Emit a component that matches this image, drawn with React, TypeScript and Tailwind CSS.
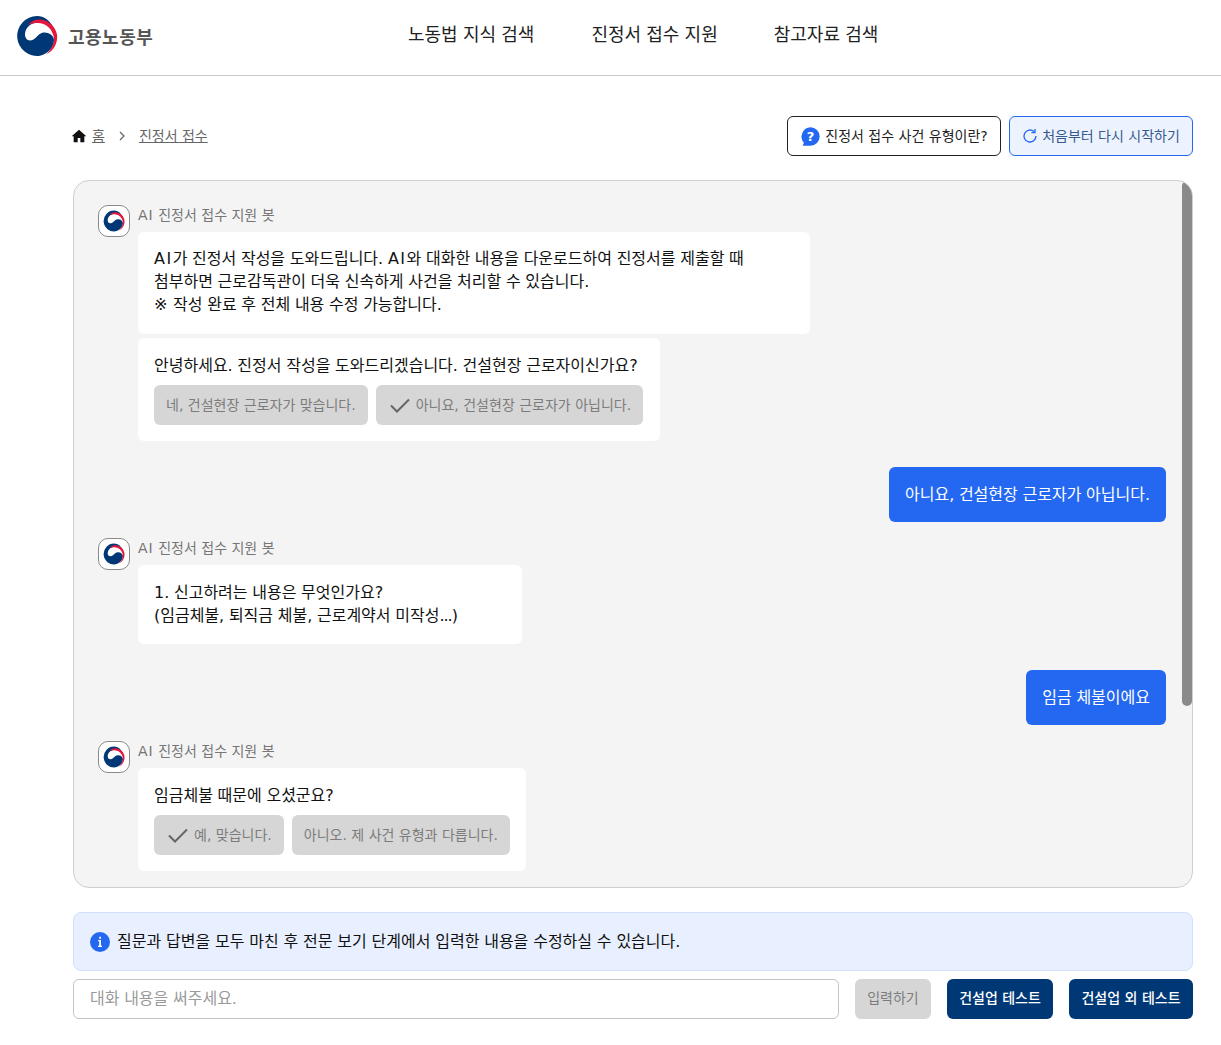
import React from "react";

function Logo({ className }: { className: string }) {
  return (
    <svg viewBox="0 0 42 42" className={className}>
      <path d="M21 1 A20 20 0 1 0 24 40.800 C33 38.500 38 31.500 38 25 C38 20.500 33 17.500 28.500 17.500 C24.500 17.500 22.500 20 20 22.500 C18 24.500 16 25.500 14 25.500 C11 25.500 9 22.500 9 19.500 C9 12.500 15 7.500 22 7.500 C29 7.500 35 10.500 38.500 15 C35.500 7 29 1 21 1 Z" fill="#003876" />
      <path d="M12 10 C15 6 20 4 24 4.500 C32 5 39.500 11 41 19.500 C42 28 38 35.500 30 39.500 C35.500 34.500 38.500 28.500 38 23 C36.500 13.500 29.500 8 22 8 C18.500 8 15 8.500 12 10 Z" fill="#e5173f" />
    </svg>
  );
}

function BotHead({ top }: { top?: boolean }) {
  return (
    <div className={top ? "flex gap-2" : "flex gap-2 mt-4"}>
      <div className="w-8 h-8 shrink-0 rounded-[10px] border border-[#8a8a8a] bg-white flex items-center justify-center">
        <Logo className="w-[22px] h-[22px]" />
      </div>
      <div className="text-sm leading-5 text-[#767676]"><span className="tracking-[1px]">AI</span> 진정서 접수 지원 봇</div>
    </div>
  );
}

function Check() {
  return (
    <svg viewBox="0 0 24 24" className="w-6 h-6 text-[#666666]" fill="none" stroke="currentColor" strokeWidth="2">
      <path d="M3 12.500 L9 18.500 L21 6.500" />
    </svg>
  );
}

function Choice({ label, checked }: { label: string; checked?: boolean }) {
  return (
    <div className="h-10 px-3 flex items-center gap-1 rounded-md bg-[#d6d6d6] text-sm text-[#7c7c7c] whitespace-nowrap [word-spacing:0px]">
      {checked && <Check />}
      {label}
    </div>
  );
}

function Bubble({ children, className }: { children: React.ReactNode; className: string }) {
  return <div className={"ml-10 rounded-md bg-white px-4 text-base leading-[23px] text-[#111111] [word-spacing:-0.4px] " + className}>{children}</div>;
}

function UserBubble({ text }: { text: string }) {
  return (
    <div className="flex justify-end mt-[26px]">
      <div className="h-[55px] px-4 flex items-center rounded-md bg-[#2468f2] text-base text-white [word-spacing:-0.4px]">{text}</div>
    </div>
  );
}

export default function App() {
  return (
    <div className="min-h-[1045px] bg-white font-['DejaVu_Sans','Noto_Sans_CJK_KR',sans-serif] text-[#111111]">
      <header className="h-[76px] border-b border-[#c8c8c8] flex">
        <div className="w-[408px] shrink-0 pl-[16px] pt-[15px] flex gap-[10px]">
          <Logo className="w-[42px] h-[42px]" />
          <div className="text-lg font-bold leading-[46px] tracking-[0.5px] text-[#555555]">고용노동부</div>
        </div>
        <nav className="flex pt-[22px] text-lg leading-[26px] text-[#222222] [word-spacing:-0.5px]">
          <div>노동법 지식 검색</div>
          <div className="ml-[57px]">진정서 접수 지원</div>
          <div className="ml-[56px]">참고자료 검색</div>
        </nav>
      </header>

      <main className="mx-[73px] mr-[28px]">
        <div className="mt-10 h-10 flex items-center justify-between">
          <div className="flex items-center text-sm text-[#666666]">
            <svg viewBox="0 0 24 24" className="w-4 h-4 text-[#111111] -ml-[2px] mr-[5px]" fill="currentColor">
              <path d="M12 2.500 L1 12.500 H4 V21.500 H10 V15 H14 V21.500 H20 V12.500 H23 Z" />
            </svg>
            <span className="underline">홈</span>
            <svg viewBox="0 0 24 24" className="w-3 h-3 mx-[11px] text-[#666666]" fill="none" stroke="currentColor" strokeWidth="2.500">
              <path d="M8 4 L16 12 L8 20" />
            </svg>
            <span className="underline">진정서 접수</span>
          </div>
          <div className="flex gap-2 text-sm">
            <div className="h-10 w-[214px] flex items-center justify-center gap-1 rounded-md border border-[#222222] text-[#222222]">
              <svg viewBox="0 0 24 24" className="w-[21px] h-[21px]">
                <path d="M12 1.500 A10.500 10.500 0 1 1 12 22.500 H3 L4.500 19 A10.500 10.500 0 0 1 12 1.500 Z" fill="#2468f2" />
                <text x="12" y="17.500" textAnchor="middle" fontSize="15" fontWeight="800" fill="#ffffff">?</text>
              </svg>
              진정서 접수 사건 유형이란?
            </div>
            <div className="h-10 w-[184px] flex items-center justify-center gap-1 rounded-md border border-[#2468f2] bg-[#edf3fe] text-[#36598f]">
              <svg viewBox="0 0 24 24" className="w-4 h-4 text-[#2468f2]" fill="none" stroke="currentColor" strokeWidth="2">
                <path d="M21 12 A9 9 0 1 1 18 5.300" />
                <path d="M19.500 1.500 V7 H14" />
              </svg>
              처음부터 다시 시작하기
            </div>
          </div>
        </div>

        <section className="relative mt-6 h-[708px] overflow-hidden rounded-2xl border border-[#cfcfcf] bg-[#f4f4f4] pt-6 pl-6 pr-[26px]">
          <div className="absolute right-0 top-0 w-[10px] h-[525px] rounded-md bg-[#8a8a8a]" />

          <BotHead top />
          <Bubble className="-mt-[5px] w-[672px] h-[102px] pt-[15px]">
            <span className="tracking-[1.5px]">AI</span>가 진정서 작성을 도와드립니다. <span className="tracking-[1.5px]">AI</span>와 대화한 내용을 다운로드하여 진정서를 제출할 때
            <br />
            첨부하면 근로감독관이 더욱 신속하게 사건을 처리할 수 있습니다.
            <br /><span className="mr-[1px]">※</span> 작성 완료 후 전체 내용 수정 가능합니다.
          </Bubble>
          <Bubble className="mt-1 w-[522px] h-[103px] pt-4">
            안녕하세요. 진정서 작성을 도와드리겠습니다. 건설현장 근로자이신가요?
            <div className="mt-[8px] flex gap-2">
              <Choice label="네, 건설현장 근로자가 맞습니다." />
              <Choice label="아니요, 건설현장 근로자가 아닙니다." checked />
            </div>
          </Bubble>

          <UserBubble text="아니요, 건설현장 근로자가 아닙니다." />

          <BotHead />
          <Bubble className="-mt-[5px] w-[384px] h-[79px] pt-4">
            1. 신고하려는 내용은 무엇인가요?
            <br />
            (임금체불, 퇴직금 체불, 근로계약서 미작성<span className="tracking-[-1px]">...</span>)
          </Bubble>

          <UserBubble text="임금 체불이에요" />

          <BotHead />
          <Bubble className="-mt-[5px] w-[388px] h-[103px] pt-4">
            임금체불 때문에 오셨군요?
            <div className="mt-[8px] flex gap-2">
              <Choice label="예, 맞습니다." checked />
              <Choice label="아니오. 제 사건 유형과 다릅니다." />
            </div>
          </Bubble>
        </section>

        <div className="mt-6 h-[59px] px-4 flex items-center gap-[7px] rounded-lg border border-[#d3e0fb] bg-[#e8effe] text-base text-[#111111] [word-spacing:-0.27px]">
          <svg viewBox="0 0 20 20" className="w-5 h-5">
            <circle cx="10" cy="10" r="10" fill="#2468f2" />
            <path d="M8.200 8 H11 V13.800 H12 V15 H8 V13.800 H9.200 V9.200 H8.200 Z M9.200 4.800 H11 V6.800 H9.200 Z" fill="#ffffff" />
          </svg>
          질문과 답변을 모두 마친 후 전문 보기 단계에서 입력한 내용을 수정하실 수 있습니다.
        </div>

        <div className="mt-2 flex gap-4 text-sm">
          <input
            className="h-10 flex-1 px-4 pb-[2px] rounded-md border border-[#c4c4c4] bg-white text-base outline-none placeholder:text-[#9a9a9a] [word-spacing:-0.4px]"
            placeholder="대화 내용을 써주세요."
          />
          <div className="h-10 w-[76px] pb-[2px] flex items-center justify-center rounded-md bg-[#d6d6d6] text-[#7c7c7c]">입력하기</div>
          <div className="h-10 w-[106px] pb-[2px] flex items-center justify-center rounded-md bg-[#003876] text-white font-medium">건설업 테스트</div>
          <div className="h-10 w-[124px] pb-[2px] flex items-center justify-center rounded-md bg-[#003876] text-white font-medium">건설업 외 테스트</div>
        </div>
      </main>
    </div>
  );
}
